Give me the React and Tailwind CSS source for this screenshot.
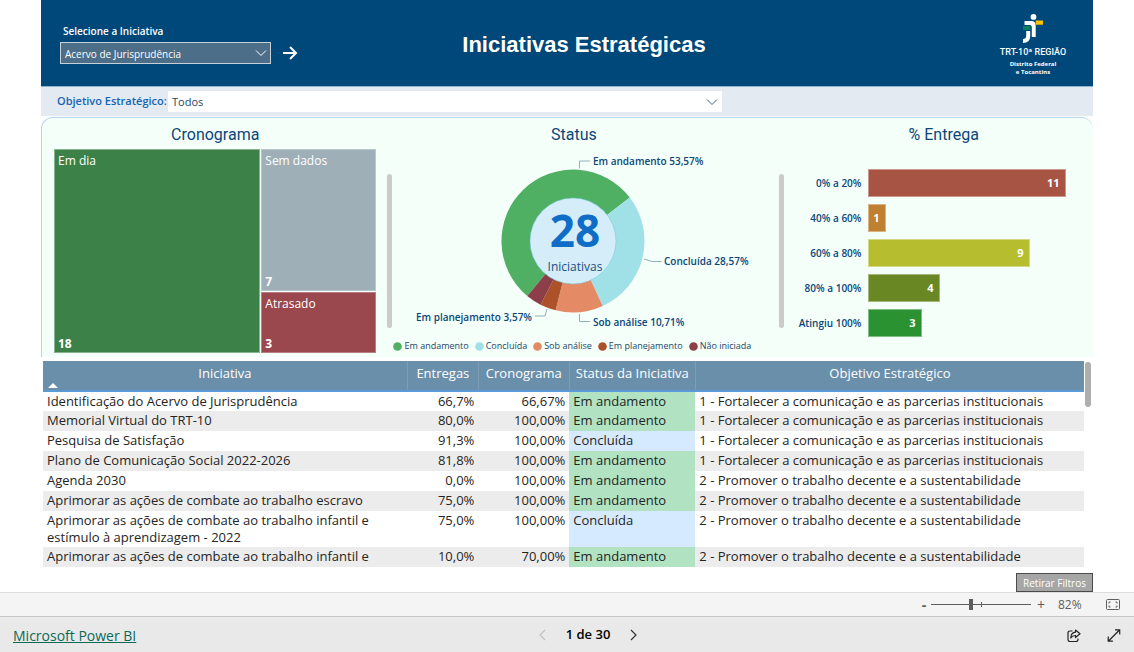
import React from "react";

const treemap = [
  { name: "Sem dados", value: 7, box: "bg-[#9fafb7] h-[142px]" },
  { name: "Atrasado", value: 3, box: "bg-[#9a474d] flex-1" },
];

const statuses = [
  { name: "Em andamento", value: 15, color: "#4faf62" },
  { name: "Concluída", value: 8, color: "#a0e1e7" },
  { name: "Sob análise", value: 3, color: "#e48b66" },
  { name: "Em planejamento", value: 1, color: "#ad5128" },
  { name: "Não iniciada", value: 1, color: "#8c3f48" },
];

const deliveries = [
  { range: "0% a 20%", value: 11, color: "#a85444" },
  { range: "40% a 60%", value: 1, color: "#c08032" },
  { range: "60% a 80%", value: 9, color: "#b6be2f" },
  { range: "80% a 100%", value: 4, color: "#698823" },
  { range: "Atingiu 100%", value: 3, color: "#2a9230" },
];

const goal1 = "1 - Fortalecer a comunicação e as parcerias institucionais";
const goal2 = "2 - Promover o trabalho decente e a sustentabilidade";

const rows = [
  ["Identificação do Acervo de Jurisprudência", "66,7%", "66,67%", "Em andamento", goal1],
  ["Memorial Virtual do TRT-10", "80,0%", "100,00%", "Em andamento", goal1],
  ["Pesquisa de Satisfação", "91,3%", "100,00%", "Concluída", goal1],
  ["Plano de Comunicação Social 2022-2026", "81,8%", "100,00%", "Em andamento", goal1],
  ["Agenda 2030", "0,0%", "100,00%", "Em andamento", goal2],
  ["Aprimorar as ações de combate ao trabalho escravo", "75,0%", "100,00%", "Em andamento", goal2],
  ["Aprimorar as ações de combate ao trabalho infantil e estímulo à aprendizagem - 2022", "75,0%", "100,00%", "Concluída", goal2],
  ["Aprimorar as ações de combate ao trabalho infantil e", "10,0%", "70,00%", "Em andamento", goal2],
];

function Chevron({ className }) {
  return (
    <svg viewBox="0 0 12 8" className={className} fill="none" stroke="currentColor" aria-hidden="true">
      <path d="M1 1.5 6 6.5 11 1.5" />
    </svg>
  );
}

function Logo() {
  return (
    <div className="flex w-[70px] flex-col items-center text-center whitespace-nowrap text-white">
      <svg viewBox="0 0 22 30" className="h-[30px] w-[22px]" aria-hidden="true">
        <circle cx="11.500" cy="2.900" r="2.900" fill="#fff" />
        <path d="M2.500 7h7q4.200 0 4.200 4.500V23H9.800V13q0-2-2-2H2.500z" fill="#fff" />
        <rect x="13.700" y="6.500" width="7.300" height="4.200" fill="#fdc300" />
        <rect x="1" y="12" width="7.500" height="4" fill="#0b7f5a" />
        <path d="M4.200 17h4v5q0 7-7.200 7v-4q3.200 0 3.200-3.500z" fill="#fff" />
      </svg>
      <p className="mt-px font-['Roboto',sans-serif] text-[9px] leading-[14px] font-medium">TRT-10ª REGIÃO</p>
      <p className="mt-px font-['Open_Sans',sans-serif] text-[6px] leading-[8px] font-bold">
        Distrito Federal<br />e Tocantins
      </p>
    </div>
  );
}

function arc(start, end, outer, inner, cx, cy) {
  const at = (f, r) => {
    const a = f * 2 * Math.PI;
    return `${cx + r * Math.sin(a)} ${cy - r * Math.cos(a)}`;
  };
  const large = end - start > 0.5 ? 1 : 0;
  return `M${at(start, outer)}A${outer} ${outer} 0 ${large} 1 ${at(end, outer)}L${at(end, inner)}A${inner} ${inner} 0 ${large} 0 ${at(start, inner)}Z`;
}

function Donut() {
  const total = statuses.reduce((s, d) => s + d.value, 0);
  let angle = -0.3895;
  const slices = statuses.map((d) => {
    const start = angle;
    angle += d.value / total;
    return { ...d, start, end: angle };
  });
  return (
    <svg viewBox="0 0 387 190" className="h-[190px] w-[387px]" role="img" aria-label="Iniciativas por status">
      {slices.map((s) => (
        <path key={s.name} d={arc(s.start, s.end, 71.5, 42, 181, 92)} fill={s.color} />
      ))}
      <circle cx="181" cy="92" r="43" fill="#d4edf9" stroke="#6cc8e0" strokeOpacity="0.5" />
      <g fill="none" stroke="#8fb0bd">
        <path d="M187.500 19.500v-7.500h10.500" />
        <path d="M252 110l8 2.500h9.500" />
        <path d="M187.500 165v7.500h10.500" />
        <path d="M155 160l-2 7h-10" />
      </g>
      <g className="font-['Open_Sans',sans-serif]" fontSize="10" fontWeight="600" fill="#0b4678">
        <text x="201" y="16">Em andamento 53,57%</text>
        <text x="272" y="116">Concluída 28,57%</text>
        <text x="201" y="177">Sob análise 10,71%</text>
        <text x="140" y="172" textAnchor="end">Em planejamento 3,57%</text>
      </g>
      <g className="font-['Open_Sans',sans-serif]" textAnchor="middle">
        <text x="183" y="98" fontSize="44" fontWeight="700" fill="#0f6cc7">28</text>
        <text x="183" y="122" fontSize="12" fill="#1c4f80">Iniciativas</text>
      </g>
    </svg>
  );
}

function PanelTitle({ children }) {
  return <h2 className="text-center font-['Roboto',sans-serif] text-[16px] leading-[20px] text-[#0b4678]">{children}</h2>;
}

function Divider() {
  return <div className="mt-[56px] h-[154px] rounded-full bg-[#cbcbcb]" />;
}

export default function App() {
  return (
    <div className="flex min-h-screen flex-col bg-white font-['Open_Sans',sans-serif]">
      <main className="mx-[41px] flex flex-1 flex-col">
        <header className="grid h-[87px] grid-cols-[1fr_auto_1fr] items-start border-b border-[#8fb3cf] bg-[#00477a] text-white">
          <div className="pt-[24px] pl-[19px]">
            <label htmlFor="iniciativa" className="block pl-[3px] text-[10px] leading-[14px] font-semibold">Selecione a Iniciativa</label>
            <div className="mt-[4px] flex items-center gap-[11px]">
              <div className="relative w-[211px]">
                <select id="iniciativa" className="block h-[22px] w-full appearance-none border border-[#c5d0d8] bg-[#4c6e88] pt-[2px] pl-[4px] text-[10px] text-white">
                  <option>Acervo de Jurisprudência</option>
                </select>
                <Chevron className="pointer-events-none absolute top-[7px] right-[4px] h-[8px] w-[12px]" />
              </div>
              <button type="button" aria-label="Ir para a iniciativa">
                <svg viewBox="0 0 16 16" className="size-[16px]" fill="none" stroke="currentColor" strokeWidth="2" aria-hidden="true">
                  <path d="M1 8h13M8 2l6 6-6 6" />
                </svg>
              </button>
            </div>
          </div>
          <h1 className="pt-[31px] pl-[34px] font-['Liberation_Sans',sans-serif] text-[22px] leading-[28px] font-bold">Iniciativas Estratégicas</h1>
          <div className="flex justify-end pt-[14px] pr-[25px]">
            <Logo />
          </div>
        </header>

        <div className="flex h-[29px] items-center bg-[#e4eaf1] pl-[16px]">
          <label htmlFor="objetivo" className="w-[111px] text-[11px] font-semibold whitespace-nowrap text-[#1464b4]">Objetivo Estratégico:</label>
          <div className="relative w-[554px]">
            <select id="objetivo" className="block h-[21px] w-full appearance-none bg-white pt-[2px] pl-[4px] text-[11px] text-[#1d4668]">
              <option>Todos</option>
            </select>
            <Chevron className="pointer-events-none absolute top-[7px] right-[4px] h-[8px] w-[12px] text-[#44617f]" />
          </div>
        </div>

        <div className="mt-px grid h-[240px] grid-cols-[346fr_5px_387fr_5px_309fr] rounded-t-[12px] border-t border-l border-[#b5d5ec] bg-[#f5fffa]">
          <section className="pt-[7px] pr-[11px] pl-[12px]">
            <PanelTitle>Cronograma</PanelTitle>
            <div className="mt-[4px] grid h-[204px] grid-cols-[206fr_115fr] gap-px text-[12px] leading-[16px] text-white">
              <div className="flex flex-col justify-between border border-white/40 bg-[#3b8148] px-[3px] pt-[3px]">
                <span>Em dia</span>
                <b>18</b>
              </div>
              <div className="flex flex-col gap-px">
                {treemap.map((t) => (
                  <div key={t.name} className={`flex flex-col justify-between border border-white/30 px-[3px] pt-[3px] ${t.box}`}>
                    <span>{t.name}</span>
                    <b>{t.value}</b>
                  </div>
                ))}
              </div>
            </div>
          </section>
          <Divider />
          <section className="flex flex-col items-center pt-[7px]">
            <div className="pr-[24px]"><PanelTitle>Status</PanelTitle></div>
            <div className="mt-[4px]"><Donut /></div>
            <ul className="flex gap-[6px] self-start pl-px text-[9px] leading-[14px] whitespace-nowrap text-[#1d4668]">
              {statuses.map((s) => (
                <li key={s.name} className="flex items-center gap-[2px]">
                  <svg viewBox="0 0 9 9" className="size-[9px]" aria-hidden="true"><circle cx="4.500" cy="4.500" r="4.300" fill={s.color} /></svg>
                  {s.name}
                </li>
              ))}
            </ul>
          </section>
          <Divider />
          <section className="pt-[7px]">
            <div className="pl-[10px]"><PanelTitle>% Entrega</PanelTitle></div>
            <ul className="mt-[24px] flex flex-col gap-[7px] text-[10px] font-semibold">
              {deliveries.map((d) => (
                <li key={d.range} className="flex h-[28px] items-center">
                  <span className="w-[77px] text-right text-[#0b4678]">{d.range}</span>
                  <span className="ml-[7px] flex h-full items-center justify-end border border-white/40 pr-[6px] text-[11px] font-bold text-white" style={{ width: d.value * 18, backgroundColor: d.color }}>
                    {d.value}
                  </span>
                </li>
              ))}
            </ul>
          </section>
        </div>

        <div className="mt-[4px] flex h-[208px] gap-px overflow-hidden pr-[2px] pl-[2px]">
          <table className="flex-1 table-fixed border-collapse self-start text-[13px] leading-[17px] text-[#252423]">
            <colgroup>
              <col className="w-[35%]" />
              <col className="w-[71px]" />
              <col className="w-[91px]" />
              <col className="w-[126px]" />
              <col />
            </colgroup>
            <thead>
              <tr className="h-[30px] bg-[#6a8fab] align-top text-white">
                {["Iniciativa", "Entregas", "Cronograma", "Status da Iniciativa", "Objetivo Estratégico"].map((h, i) => (
                  <th key={h} scope="col" className="relative border-r border-b-2 border-r-[#7c9db5] border-b-[#5b9bd5] p-0 pt-[4px] font-normal whitespace-nowrap last:border-r-0">
                    {h}
                    {i === 0 && (
                      <svg viewBox="0 0 10 5" className="absolute bottom-[2px] left-[5px] h-[5px] w-[10px]" aria-hidden="true">
                        <path d="M0 5 5 0l5 5z" fill="#fff" />
                      </svg>
                    )}
                  </th>
                ))}
              </tr>
            </thead>
            <tbody>
              {rows.map((r) => (
                <tr key={r[0]} className="h-[20px] align-top even:bg-[#ececec]">
                  <td className="px-[4px] pt-px pb-px">{r[0]}</td>
                  <td className="px-[4px] pt-px pb-px text-right">{r[1]}</td>
                  <td className="px-[4px] pt-px pb-px text-right">{r[2]}</td>
                  <td className={`px-[4px] pt-px pb-px ${r[3] === "Concluída" ? "bg-[#d6eaff]" : "bg-[#b1e3c3]"}`}>{r[3]}</td>
                  <td className="px-[4px] pt-px pb-px whitespace-nowrap">{r[4]}</td>
                </tr>
              ))}
            </tbody>
          </table>
          <div className="mt-px h-[45px] w-[6px] rounded-full bg-[#b0aeac]" />
        </div>

        <div className="mt-[4px] flex justify-end">
          <button type="button" className="h-[19px] w-[77px] border border-[#4b4b4b] bg-[#a6a6a6] text-[10px] leading-[16px] whitespace-nowrap text-white">Retirar Filtros</button>
        </div>
      </main>

      <div className="flex h-[24px] items-center justify-end border-t border-[#dcdcdc] bg-[#f4f4f4] pr-[14px] text-[#605e5c]">
        <button type="button" aria-label="Reduzir" className="w-[14px] text-[14px] leading-[20px] font-bold">-</button>
        <div className="relative flex w-[100px] items-center">
          <span className="absolute left-[50px] h-[5px] w-px bg-[#605e5c]" />
          <input
            type="range"
            aria-label="Zoom"
            min="0"
            max="100"
            defaultValue="40"
            className="relative h-[11px] w-full appearance-none bg-transparent [&::-webkit-slider-runnable-track]:h-px [&::-webkit-slider-runnable-track]:bg-[#605e5c] [&::-webkit-slider-thumb]:mt-[-5px] [&::-webkit-slider-thumb]:h-[11px] [&::-webkit-slider-thumb]:w-[4px] [&::-webkit-slider-thumb]:appearance-none [&::-webkit-slider-thumb]:bg-[#605e5c]"
          />
        </div>
        <button type="button" aria-label="Ampliar" className="w-[20px] text-[14px] leading-[20px]">+</button>
        <span className="ml-[7px] w-[26px] text-[12px]">82%</span>
        <button type="button" aria-label="Ajustar à página" className="ml-[22px]">
          <svg viewBox="0 0 14 11" className="h-[11px] w-[14px]" fill="none" stroke="currentColor" aria-hidden="true">
            <rect x="0.500" y="0.500" width="13" height="10" rx="1" />
            <path d="M3 4.500v-1.500h1.500M9.500 3h1.500v1.500M11 6.500v1.500H9.500M4.500 8H3V6.500" />
          </svg>
        </button>
      </div>

      <footer className="grid h-[36px] grid-cols-[1fr_auto_1fr] items-center border-t border-[#c8c8c8] bg-[#e9e9e9] pt-px pr-[13px] pl-[13px]">
        <a href="#" className="text-[14px] text-[#0b6a56] underline">Microsoft Power BI</a>
        <nav aria-label="Páginas" className="flex items-center gap-[20px] pl-[42px]">
          <button type="button" aria-label="Página anterior" disabled className="text-[#c0c0c0]">
            <svg viewBox="0 0 7 12" className="h-[12px] w-[7px]" fill="none" stroke="currentColor" strokeWidth="1.100" aria-hidden="true"><path d="M6 1 1 6l5 5" /></svg>
          </button>
          <span className="text-[13px] font-semibold text-black">1 de 30</span>
          <button type="button" aria-label="Próxima página" className="text-[#333]">
            <svg viewBox="0 0 7 12" className="h-[12px] w-[7px]" fill="none" stroke="currentColor" strokeWidth="1.200" aria-hidden="true"><path d="M1 1l5 5-5 5" /></svg>
          </button>
        </nav>
        <div className="flex items-center justify-end gap-[26px] text-[#252423]">
          <button type="button" aria-label="Compartilhar">
            <svg viewBox="0 0 14 13" className="h-[13px] w-[14px]" fill="none" stroke="currentColor" strokeWidth="1.200" strokeLinejoin="round" aria-hidden="true">
              <path d="M5.500 2H3Q1 2 1 4v6.500q0 2 2 2h6q2 0 2-2V9.500" />
              <path d="M8.500 1 13 4.800 8.500 8.500V6.500Q5.500 6.300 3.800 9 4 3.500 8.500 3.200z" />
            </svg>
          </button>
          <button type="button" aria-label="Tela inteira">
            <svg viewBox="0 0 14 13" className="h-[13px] w-[14px]" fill="none" stroke="currentColor" strokeWidth="1.200" aria-hidden="true">
              <path d="M1.500 12 12.500 1M8 .8h4.700v4.700M1.200 7.500v4.700h4.700" />
            </svg>
          </button>
        </div>
      </footer>
    </div>
  );
}
